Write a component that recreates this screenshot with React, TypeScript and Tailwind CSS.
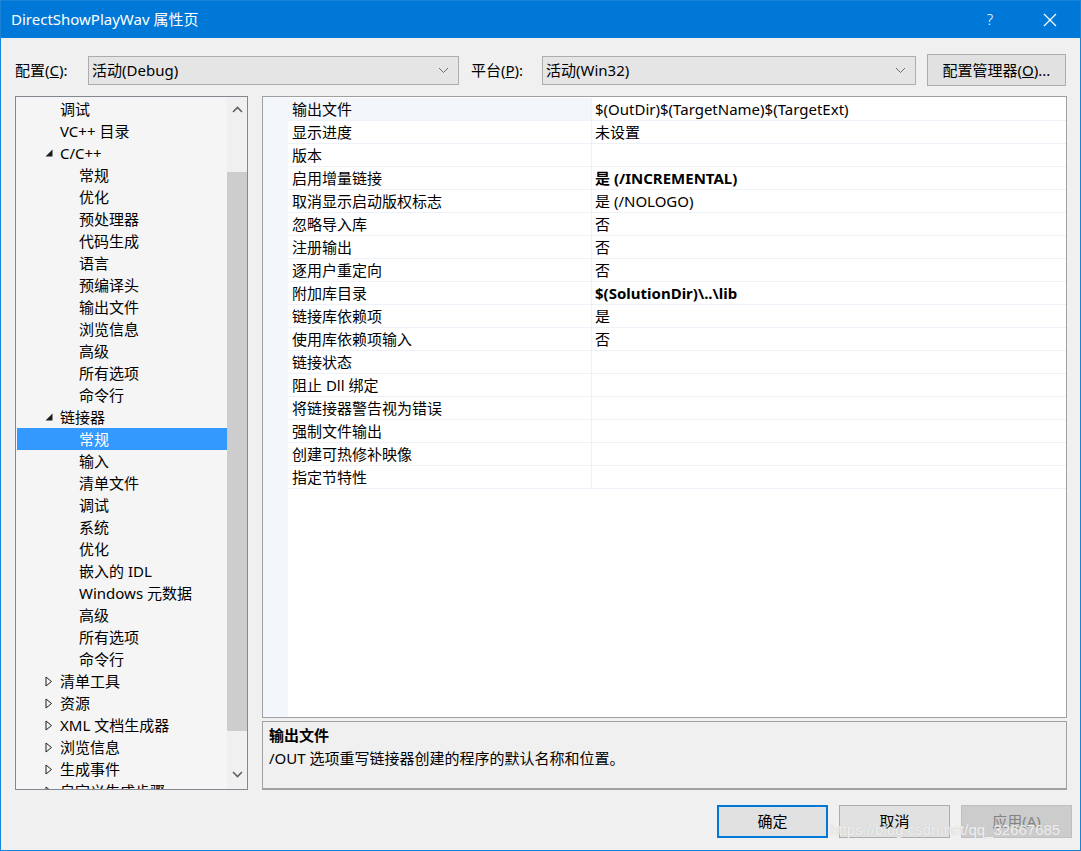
import React from 'react';

type TreeItem = { label: string; level: 1 | 2; expander?: 'open' | 'closed'; selected?: boolean };

const treeItems: TreeItem[] = [
  { label: '调试', level: 1 },
  { label: 'VC++ 目录', level: 1 },
  { label: 'C/C++', level: 1, expander: 'open' },
  { label: '常规', level: 2 },
  { label: '优化', level: 2 },
  { label: '预处理器', level: 2 },
  { label: '代码生成', level: 2 },
  { label: '语言', level: 2 },
  { label: '预编译头', level: 2 },
  { label: '输出文件', level: 2 },
  { label: '浏览信息', level: 2 },
  { label: '高级', level: 2 },
  { label: '所有选项', level: 2 },
  { label: '命令行', level: 2 },
  { label: '链接器', level: 1, expander: 'open' },
  { label: '常规', level: 2, selected: true },
  { label: '输入', level: 2 },
  { label: '清单文件', level: 2 },
  { label: '调试', level: 2 },
  { label: '系统', level: 2 },
  { label: '优化', level: 2 },
  { label: '嵌入的 IDL', level: 2 },
  { label: 'Windows 元数据', level: 2 },
  { label: '高级', level: 2 },
  { label: '所有选项', level: 2 },
  { label: '命令行', level: 2 },
  { label: '清单工具', level: 1, expander: 'closed' },
  { label: '资源', level: 1, expander: 'closed' },
  { label: 'XML 文档生成器', level: 1, expander: 'closed' },
  { label: '浏览信息', level: 1, expander: 'closed' },
  { label: '生成事件', level: 1, expander: 'closed' },
  { label: '自定义生成步骤', level: 1, expander: 'closed' },
];

const props: { name: string; value: string; bold?: boolean }[] = [
  { name: '输出文件', value: '$(OutDir)$(TargetName)$(TargetExt)' },
  { name: '显示进度', value: '未设置' },
  { name: '版本', value: '' },
  { name: '启用增量链接', value: '是 (/INCREMENTAL)', bold: true },
  { name: '取消显示启动版权标志', value: '是 (/NOLOGO)' },
  { name: '忽略导入库', value: '否' },
  { name: '注册输出', value: '否' },
  { name: '逐用户重定向', value: '否' },
  { name: '附加库目录', value: '$(SolutionDir)\\..\\lib', bold: true },
  { name: '链接库依赖项', value: '是' },
  { name: '使用库依赖项输入', value: '否' },
  { name: '链接状态', value: '' },
  { name: '阻止 Dll 绑定', value: '' },
  { name: '将链接器警告视为错误', value: '' },
  { name: '强制文件输出', value: '' },
  { name: '创建可热修补映像', value: '' },
  { name: '指定节特性', value: '' },
];

const Chevron = () => (
  <svg width="11" height="7" viewBox="0 0 11 7" className="shrink-0">
    <path d="M1 1 L5.5 5.5 L10 1" fill="none" stroke="#6d6d6d" strokeWidth="1" />
  </svg>
);

const Combo = ({ text, width }: { text: string; width: string }) => (
  <div className={`${width} h-[29px] border border-[#adadad] bg-[#e5e5e5] flex items-center pl-[3px] pr-[9px]`}>
    <span className="flex-1 text-[15px] text-black">{text}</span>
    <Chevron />
  </div>
);

const Expander = ({ kind }: { kind: 'open' | 'closed' }) =>
  kind === 'open' ? (
    <svg width="8" height="8" viewBox="0 0 8 8">
      <polygon points="7.5,0.5 7.5,7.5 0.5,7.5" fill="#1e1e1e" />
    </svg>
  ) : (
    <svg width="8" height="11" viewBox="0 0 8 11">
      <polygon points="1,1 6.5,5.5 1,10" fill="none" stroke="#1e1e1e" strokeWidth="1" />
    </svg>
  );

const ScrollArrow = ({ up }: { up?: boolean }) => (
  <svg width="11" height="7" viewBox="0 0 11 7">
    <path d={up ? 'M1 6 L5.5 1.5 L10 6' : 'M1 1 L5.5 5.5 L10 1'} fill="none" stroke="#606060" strokeWidth="1.6" />
  </svg>
);

export default function App() {
  return (
    <div
      className="relative w-[1081px] h-[851px] overflow-hidden border border-[#1883d7] bg-[#f0f0f0] flex flex-col text-black"
      style={{ fontFamily: '"Segoe UI", "Noto Sans", "Noto Sans CJK SC", sans-serif' }}
    >
      {/* title bar */}
      <div className="h-[37px] shrink-0 bg-[#0078d7] flex items-center pl-[10px] text-white">
        <span className="flex-1 text-[15px]">DirectShowPlayWav 属性页</span>
        <span className="w-[20px] text-center text-[15px] mr-[43px] font-light">?</span>
        <svg width="14" height="14" viewBox="0 0 14 14" className="mr-[23px]">
          <path d="M1 1 L13 13 M13 1 L1 13" stroke="#ffffff" strokeWidth="1.2" />
        </svg>
      </div>

      {/* configuration row */}
      <div className="h-[32px] mt-[16px] shrink-0 flex items-center pl-[14px] pr-[14px]">
        <span className="w-[73px] text-[15px]">
          配置(<span className="underline">C</span>):
        </span>
        <Combo text="活动(Debug)" width="w-[371px]" />
        <span className="w-[83px] pl-[12px] text-[15px]">
          平台(<span className="underline">P</span>):
        </span>
        <Combo text="活动(Win32)" width="w-[374px]" />
        <div className="ml-[11px] w-[139px] h-[32px] border border-[#adadad] bg-[#e1e1e1] flex items-center justify-center text-[15px]">
          配置管理器(<span className="underline">O</span>)...
        </div>
      </div>

      {/* main area */}
      <div className="mt-[10px] h-[694px] shrink-0 flex pl-[14px] gap-[14px]">
        {/* tree */}
        <div className="w-[233px] h-full border border-[#828790] bg-[#f5f5f5] flex overflow-hidden">
          <div className="flex-1 pt-[1px] overflow-hidden">
            {treeItems.map((it, i) => (
              <div
                key={i}
                className={`h-[22px] flex items-center text-[15px] whitespace-nowrap ${
                  it.selected ? 'bg-[#3399ff] text-white ml-[1px]' : ''
                }`}
              >
                <span className={`${it.selected ? 'w-[28px]' : 'w-[29px]'} shrink-0`} />
                <span className="w-[15px] shrink-0 flex items-center">
                  {it.expander && <Expander kind={it.expander} />}
                </span>
                {it.level === 2 && <span className="w-[19px] shrink-0" />}
                <span>{it.label}</span>
              </div>
            ))}
          </div>
          <div className="w-[20px] shrink-0 bg-[#f0f0f0] flex flex-col">
            <div className="h-[24px] flex items-center justify-center">
              <ScrollArrow up />
            </div>
            <div className="h-[51px]" />
            <div className="h-[559px] bg-[#cdcdcd]" />
            <div className="flex-1" />
            <div className="h-[30px] flex items-center justify-center">
              <ScrollArrow />
            </div>
          </div>
        </div>

        {/* right column */}
        <div className="w-[805px] h-full flex flex-col">
          <div className="h-[622px] border border-[#a0a0a0] bg-white flex">
            <div className="w-[25px] shrink-0 bg-[#f3f6fb]" />
            <div className="flex-1 pt-[1px]">
              {props.map((p, i) => (
                <div key={i} className="h-[23px] flex border-b border-[#eef2f8] text-[15px]">
                  <div className={`w-[304px] shrink-0 border-r border-[#eef2f8] pl-[4px] flex items-center ${i === 0 ? 'bg-[#f3f6fb]' : ''}`}>
                    {p.name}
                  </div>
                  <div className={`flex-1 pl-[3px] flex items-center ${p.bold ? 'font-bold' : ''}`}>{p.value}</div>
                </div>
              ))}
            </div>
          </div>
          <div className="mt-[3px] flex-1 border border-[#a0a0a0] border-b-2 border-b-[#a0a0a0] bg-[#f0f0f0] pl-[6px] pt-[2px]">
            <div className="h-[23px] flex items-center text-[15px] font-bold">输出文件</div>
            <div className="h-[23px] flex items-center text-[15px]">/OUT 选项重写链接器创建的程序的默认名称和位置。</div>
          </div>
        </div>
      </div>

      {/* buttons */}
      <div className="mt-[15px] flex pl-[716px] gap-[11px]">
        <div className="w-[111px] h-[33px] border-2 border-[#0078d7] bg-[#e1e1e1] flex items-center justify-center text-[15px]">确定</div>
        <div className="w-[111px] h-[33px] border border-[#adadad] bg-[#e1e1e1] flex items-center justify-center text-[15px]">取消</div>
        <div className="w-[111px] h-[33px] border border-[#bfbfbf] bg-[#cccccc] flex items-center justify-center text-[15px] text-[#838383]">应用(A)</div>
      </div>

      {/* watermark */}
      <div
        className="absolute left-[829px] top-[820px] text-[15px] leading-[18px] text-white/80 pointer-events-none whitespace-nowrap"
        style={{ fontFamily: '"Liberation Sans", sans-serif', textShadow: '0 0 1px #b0b0b0' }}
      >
        https://blog.csdn.net/qq_32667685
      </div>
    </div>
  );
}
